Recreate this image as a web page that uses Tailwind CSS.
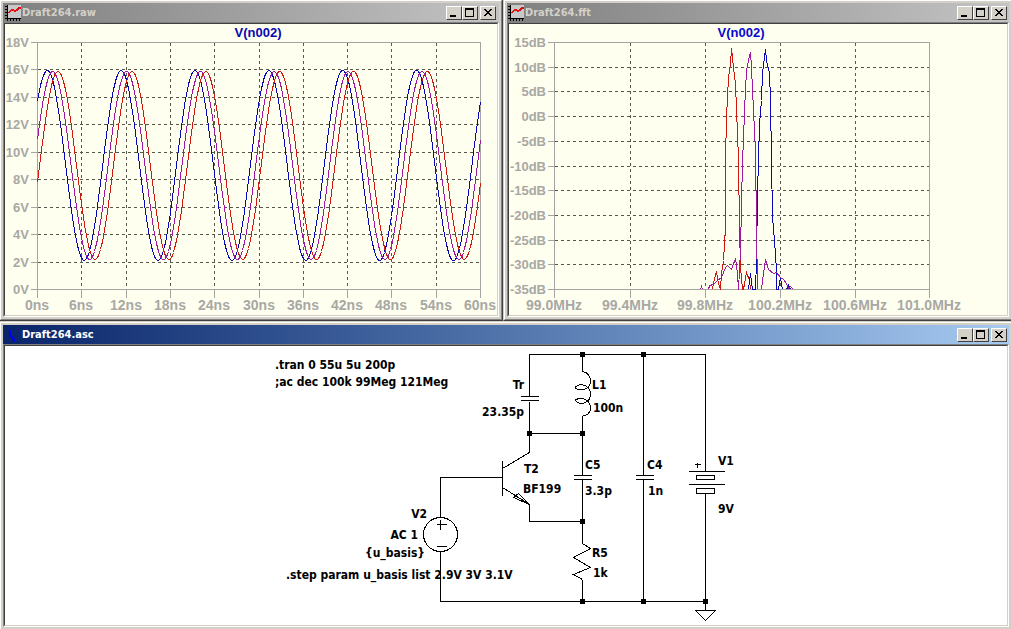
<!DOCTYPE html>
<html lang="en">
<head>
<meta charset="utf-8">
<meta name="viewport" content="width=device-width, initial-scale=1">
<title>Draft264</title>
<script src="https://cdn.jsdelivr.net/npm/@tailwindcss/browser@4"></script>
</head>
<body class="bg-[#d4d0c8]">

<!-- Shared symbols: title bar icons and button glyphs -->
<svg class="hidden" aria-hidden="true">
  <symbol id="plot-icon" viewBox="0 0 16 16">
    <rect x="3" y="0" width="13" height="13" fill="#c8c8c8"/>
    <path d="M2 0H3V13H16V14H3V16H2V14H0V13H2ZM0 1H2V2H0ZM0 4H2V5H0ZM0 7H2V8H0ZM0 10H2V11H0ZM5 14H6V16H5ZM8 14H9V16H8ZM11 14H12V16H11ZM14 14H15V16H14Z" fill="#000"/>
    <path d="M3 7H4V6H5V5H6V4H9V5H11V4H12V3H13V2H16V4H14V5H13V6H11V7H9V6H6V7H5V8H3Z" fill="#e01010"/>
  </symbol>
  <symbol id="min" viewBox="0 0 12 10"><path d="M2 7H8V9H2Z"/></symbol>
  <symbol id="max" viewBox="0 0 12 10"><path fill-rule="evenodd" d="M1 0H10V9H1ZM2 2V8H9V2Z"/></symbol>
  <symbol id="close" viewBox="0 0 12 10"><path d="M2 1H4V2H5V3H7V2H8V1H10V2H9V3H8V4H7V5H8V6H9V7H10V8H8V7H7V6H5V7H4V8H2V7H3V6H4V5H5V4H4V3H3V2H2Z"/></symbol>
</svg>

<div class="overflow-hidden">
<main class="-mt-px -mr-0.5 -mb-0.5 -ml-px grid grid-cols-[504fr_510fr] items-start">

  <section aria-label="Draft264.raw" class="min-w-0 border border-t-[#d4d0c8] border-l-[#d4d0c8] border-r-[#404040] border-b-[#404040]">
    <div class="border border-t-white border-l-white border-r-[#808080] border-b-[#808080] bg-[#d4d0c8] p-0.5">
      <header class="flex h-[19px] items-center bg-linear-to-r from-[#808080] to-[#c4c4c4] pr-[3px] pl-0.5">
        <svg class="size-4 shrink-0" shape-rendering="crispEdges"><use href="#plot-icon"/></svg>
        <h2 class="grow truncate pl-px font-['DejaVu_Sans_Condensed','DejaVu_Sans',sans-serif] text-[11px] leading-4 font-bold text-[#d4d0c8]">Draft264.raw</h2>
        <button type="button" aria-label="Minimize" class="h-3.5 w-4 border border-t-white border-l-white border-r-[#404040] border-b-[#404040] bg-[#d4d0c8] pt-px pl-px"><svg class="block h-2.5 w-3" shape-rendering="crispEdges"><use href="#min"/></svg></button>
        <button type="button" aria-label="Maximize" class="h-3.5 w-4 border border-t-white border-l-white border-r-[#404040] border-b-[#404040] bg-[#d4d0c8] pt-px pl-px"><svg class="block h-2.5 w-3" shape-rendering="crispEdges"><use href="#max"/></svg></button>
        <button type="button" aria-label="Close" class="ml-0.5 h-3.5 w-4 border border-t-white border-l-white border-r-[#404040] border-b-[#404040] bg-[#d4d0c8] pt-px pl-px"><svg class="block h-2.5 w-3" shape-rendering="crispEdges"><use href="#close"/></svg></button>
      </header>
      <div class="border border-t-[#808080] border-l-[#808080] border-r-white border-b-white">
        <div class="border border-t-[#404040] border-l-[#404040] border-r-[#d4d0c8] border-b-[#d4d0c8] bg-[#fffff0]">
          <svg viewBox="5 24 492 291" class="block h-auto w-full font-['Liberation_Sans',sans-serif] text-sm font-bold" role="img" aria-label="V(n002) over time">
            <g transform="translate(.5 .5)" fill="none" shape-rendering="crispEdges">
              <path stroke="#56564a" stroke-dasharray="3 3" d="M37 69H480M37 97H480M37 124H480M37 152H480M37 179H480M37 207H480M37 234H480M37 262H480M81 42V289M126 42V289M170 42V289M214 42V289M259 42V289M303 42V289M347 42V289M391 42V289M436 42V289"/>
              <path stroke="#a4a4a0" d="M37 42H480V289H37ZM30 42H37M30 69H37M30 97H37M30 124H37M30 152H37M30 179H37M30 207H37M30 234H37M30 262H37M30 289H37M37 289V297M81 289V297M126 289V297M170 289V297M214 289V297M259 289V297M303 289V297M347 289V297M391 289V297M436 289V297M480 289V297"/>
              <polyline id="wave-blue" stroke="#0808b8"/>
              <polyline id="wave-red" stroke="#d01810"/>
              <polyline id="wave-purple" stroke="#a018a4"/>
            </g>
            <text x="258" y="37" text-anchor="middle" fill="#0808b0" class="text-[13px]">V(n002)</text>
            <g fill="#a8a8a4" text-anchor="end" class="text-[13px]">
              <text x="29" y="47">18V</text><text x="29" y="74">16V</text><text x="29" y="102">14V</text><text x="29" y="129">12V</text><text x="29" y="157">10V</text><text x="29" y="184">8V</text><text x="29" y="212">6V</text><text x="29" y="239">4V</text><text x="29" y="267">2V</text><text x="29" y="294">0V</text>
            </g>
            <g fill="#a8a8a4" text-anchor="middle">
              <text x="37" y="310">0ns</text><text x="81" y="310">6ns</text><text x="126" y="310">12ns</text><text x="170" y="310">18ns</text><text x="214" y="310">24ns</text><text x="259" y="310">30ns</text><text x="303" y="310">36ns</text><text x="347" y="310">42ns</text><text x="391" y="310">48ns</text><text x="436" y="310">54ns</text><text x="480" y="310">60ns</text>
            </g>
          </svg>
        </div>
      </div>
    </div>
  </section>

  <section aria-label="Draft264.fft" class="min-w-0 border border-t-[#d4d0c8] border-l-[#d4d0c8] border-r-[#404040] border-b-[#404040]">
    <div class="border border-t-white border-l-white border-r-[#808080] border-b-[#808080] bg-[#d4d0c8] p-0.5">
      <header class="flex h-[19px] items-center bg-linear-to-r from-[#808080] to-[#c4c4c4] pr-0.5 pl-px">
        <svg class="size-4 shrink-0" shape-rendering="crispEdges"><use href="#plot-icon"/></svg>
        <h2 class="grow truncate pl-px font-['DejaVu_Sans_Condensed','DejaVu_Sans',sans-serif] text-[11px] leading-4 font-bold text-[#d4d0c8]">Draft264.fft</h2>
        <button type="button" aria-label="Minimize" class="h-3.5 w-4 border border-t-white border-l-white border-r-[#404040] border-b-[#404040] bg-[#d4d0c8] pt-px pl-px"><svg class="block h-2.5 w-3" shape-rendering="crispEdges"><use href="#min"/></svg></button>
        <button type="button" aria-label="Maximize" class="h-3.5 w-4 border border-t-white border-l-white border-r-[#404040] border-b-[#404040] bg-[#d4d0c8] pt-px pl-px"><svg class="block h-2.5 w-3" shape-rendering="crispEdges"><use href="#max"/></svg></button>
        <button type="button" aria-label="Close" class="ml-0.5 h-3.5 w-4 border border-t-white border-l-white border-r-[#404040] border-b-[#404040] bg-[#d4d0c8] pt-px pl-px"><svg class="block h-2.5 w-3" shape-rendering="crispEdges"><use href="#close"/></svg></button>
      </header>
      <div class="border border-t-[#808080] border-l-[#808080] border-r-white border-b-white">
        <div class="border border-t-[#404040] border-l-[#404040] border-r-[#d4d0c8] border-b-[#d4d0c8] bg-[#fffff0]">
          <svg viewBox="509 24 498 291" class="block h-auto w-full font-['Liberation_Sans',sans-serif] text-sm font-bold" role="img" aria-label="V(n002) spectrum">
            <g transform="translate(.5 .5)" fill="none" shape-rendering="crispEdges">
              <path stroke="#56564a" stroke-dasharray="3 3" d="M554 67H929M554 91H929M554 116H929M554 141H929M554 166H929M554 190H929M554 215H929M554 240H929M554 264H929M630 42V289M705 42V289M780 42V289M855 42V289"/>
              <path stroke="#a4a4a0" d="M554 42H929V289H554ZM547 42H554M547 67H554M547 91H554M547 116H554M547 141H554M547 166H554M547 190H554M547 215H554M547 240H554M547 264H554M547 289H554M554 289V297M630 289V297M705 289V297M780 289V297M855 289V297M929 289V297"/>
              <polyline stroke="#d01810" points="712,289 713,282 716,271 718,283 720,289 721,273 723,260 725,227 725,160 726,117 728,77 730,63 731,48 733,67 735,83 736,110 737,133 738,160 739,227 740,267 742,289 743,289 746,272 749,280 750,289"/>
              <polyline stroke="#0808b8" points="748,289 750,273 752,289 755,289 756,260 757,193 758,160 759,123 761,100 762,72 765,49 766,60 769,73 770,100 771,160 772,217 774,240 776,270 776,289 778,289 780,277 782,289"/>
              <polyline stroke="#0808b8" points="786,289 788,285 790,289"/>
              <polyline stroke="#a018a4" points="700,289 701,286 702,289"/>
              <polyline stroke="#a018a4" points="708,289 709,285 713,284 717,280 721,277 725,267 727,265 731,269 735,258 737,273 738,289 740,250 742,160 743,140 744,110 746,70 749,55 750,52 751,67 753,110 755,150 756,227 757,289"/>
              <polyline stroke="#a018a4" points="761,289 763,273 765,259 768,269 773,273 776,272 780,277 783,279 786,283 788,288 790,286 793,289"/>
            </g>
            <text x="741" y="37" text-anchor="middle" fill="#0808d0" class="text-[13px]">V(n002)</text>
            <g fill="#a8a8a4" text-anchor="end" class="text-[13px]">
              <text x="546" y="47">15dB</text><text x="546" y="72">10dB</text><text x="546" y="96">5dB</text><text x="546" y="121">0dB</text><text x="546" y="146">-5dB</text><text x="546" y="171">-10dB</text><text x="546" y="195">-15dB</text><text x="546" y="220">-20dB</text><text x="546" y="245">-25dB</text><text x="546" y="269">-30dB</text><text x="546" y="294">-35dB</text>
            </g>
            <g fill="#a8a8a4" text-anchor="middle">
              <text x="554" y="310">99.0MHz</text><text x="630" y="310">99.4MHz</text><text x="705" y="310">99.8MHz</text><text x="780" y="310">100.2MHz</text><text x="855" y="310">100.6MHz</text><text x="929" y="310">101.0MHz</text>
            </g>
          </svg>
        </div>
      </div>
    </div>
  </section>

  <section aria-label="Draft264.asc" class="col-span-2 min-w-0 border border-t-[#d4d0c8] border-l-[#d4d0c8] border-r-[#404040] border-b-[#404040]">
    <div class="border border-t-white border-l-white border-r-[#808080] border-b-[#808080] bg-[#d4d0c8] p-0.5">
      <header class="flex h-[19px] items-center bg-linear-to-r from-[#0a246a] to-[#a6caf0] pr-0.5 pl-0.5">
        <svg viewBox="0 0 16 16" class="size-4 shrink-0" fill="none" stroke="#0000ff" aria-hidden="true"><path stroke-width="2" d="M5 3V10M5 8L10 14"/></svg>
        <h2 class="grow truncate pl-px font-['DejaVu_Sans_Condensed','DejaVu_Sans',sans-serif] text-[11px] leading-4 font-bold text-white">Draft264.asc</h2>
        <button type="button" aria-label="Minimize" class="h-3.5 w-4 border border-t-white border-l-white border-r-[#404040] border-b-[#404040] bg-[#d4d0c8] pt-px pl-px"><svg class="block h-2.5 w-3" shape-rendering="crispEdges"><use href="#min"/></svg></button>
        <button type="button" aria-label="Maximize" class="h-3.5 w-4 border border-t-white border-l-white border-r-[#404040] border-b-[#404040] bg-[#d4d0c8] pt-px pl-px"><svg class="block h-2.5 w-3" shape-rendering="crispEdges"><use href="#max"/></svg></button>
        <button type="button" aria-label="Close" class="ml-0.5 h-3.5 w-4 border border-t-white border-l-white border-r-[#404040] border-b-[#404040] bg-[#d4d0c8] pt-px pl-px"><svg class="block h-2.5 w-3" shape-rendering="crispEdges"><use href="#close"/></svg></button>
      </header>
      <div class="border border-t-[#808080] border-l-[#808080] border-r-white border-b-white">
        <div class="border border-t-[#404040] border-l-[#404040] border-r-[#d4d0c8] border-b-[#d4d0c8] bg-white">
          <svg viewBox="5 346 1002 279" class="block h-auto w-full font-['DejaVu_Sans_Condensed','DejaVu_Sans',sans-serif] text-xs font-bold" role="img" aria-label="Oscillator schematic">
            <g transform="translate(.5 .5)" fill="none" stroke="#000" shape-rendering="crispEdges">
              <!-- wires -->
              <path d="M529 396V354H705V471M529 401V452M529 433H582M582 354V371M582 415V475M582 479V543M529 504V521H582M582 579V601M643 354V475M643 479V601M440 517V477H502M440 551V601H705M705 493V610"/>
              <!-- capacitors -->
              <path d="M520 396H538M520 400H538M573 475H591M573 479H591M635 475H653M635 479H653"/>
              <!-- inductor -->
              <path d="M582 371C588 372 590 377 590 381C590 387 585 389 580 389C577 389 575 388 575 387C575 386 578 384 581 384C586 385 590 388 590 394C590 400 585 403 580 403C577 402 575 401 575 400C575 399 578 398 581 398C586 398 590 402 590 407C590 412 587 415 582 415"/>
              <!-- transistor -->
              <path d="M502 460V495M502 468L529 452M502 487L529 504L513 497L518 493L529 504"/>
              <!-- resistor -->
              <path d="M582 543L590 548L573 557L590 567L573 574L582 579"/>
              <!-- battery and ground -->
              <path d="M688 471H724M688 484H724M696 475H714V479H696ZM696 488H714V493H696ZM694 464H700M697 462V467M695 610H715L705 620Z"/>
              <!-- AC source -->
              <circle cx="440" cy="534" r="17"/>
              <path d="M436 524H446M440 519V529M436 546H446"/>
            </g>
            <path shape-rendering="crispEdges" d="M580 352h5v5h-5zM641 352h5v5h-5zM527 431h5v5h-5zM580 431h5v5h-5zM580 519h5v5h-5zM580 599h5v5h-5zM641 599h5v5h-5zM703 599h5v5h-5z"/>
            <text x="275" y="369">.tran 0 55u 5u 200p</text>
            <text x="275" y="386">;ac dec 100k 99Meg 121Meg</text>
            <text x="524" y="389" text-anchor="end">Tr</text>
            <text x="524" y="416" text-anchor="end">23.35p</text>
            <text x="592" y="389">L1</text>
            <text x="593" y="412">100n</text>
            <text x="524" y="473">T2</text>
            <text x="523" y="493">BF199</text>
            <text x="585" y="469">C5</text>
            <text x="585" y="495">3.3p</text>
            <text x="647" y="469">C4</text>
            <text x="648" y="495">1n</text>
            <text x="718" y="465">V1</text>
            <text x="718" y="513">9V</text>
            <text x="427" y="518" text-anchor="end">V2</text>
            <text x="418" y="539" text-anchor="end">AC 1</text>
            <text x="425" y="557" text-anchor="end">{u_basis}</text>
            <text x="286" y="579">.step param u_basis list 2.9V 3V 3.1V</text>
            <text x="592" y="557">R5</text>
            <text x="593" y="577">1k</text>
          </svg>
        </div>
      </div>
    </div>
  </section>
</main>
</div>

<script>
  // Steady-state traces: one sample per plot column, phase given by the first crest.
  const traces = [
    { id: "wave-blue", crest: 46.8, top: 70, bottom: 260 },
    { id: "wave-purple", crest: 52.2, top: 71, bottom: 259 },
    { id: "wave-red", crest: 57.6, top: 71, bottom: 259 },
  ];
  const period = 73.85;
  for (const { id, crest, top, bottom } of traces) {
    const points = [];
    for (let x = 37; x <= 480; x++) {
      const c = Math.cos(((x - crest) / period) * 2 * Math.PI);
      points.push(x + "," + Math.round((top + bottom) / 2 - (c * (bottom - top)) / 2));
    }
    document.getElementById(id).setAttribute("points", points.join(" "));
  }
</script>
</body>
</html>
